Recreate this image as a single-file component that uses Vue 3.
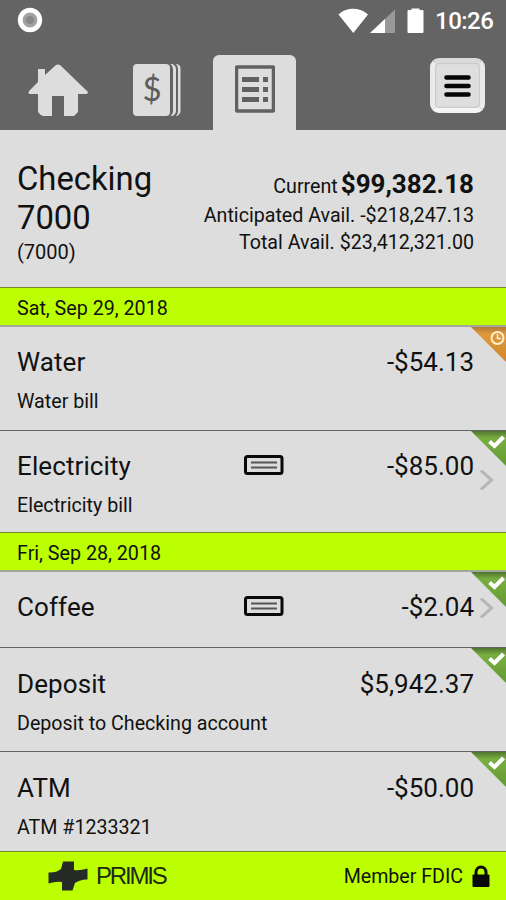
<script setup>
const groups = [
  {
    date: 'Sat, Sep 29, 2018',
    items: [
      { name: 'Water', amount: '-$54.13', memo: 'Water bill', state: 'pending', size: 'tall' },
      { name: 'Electricity', amount: '-$85.00', memo: 'Electricity bill', state: 'cleared', check: true, more: true, size: 'mid' },
    ],
  },
  {
    date: 'Fri, Sep 28, 2018',
    items: [
      { name: 'Coffee', amount: '-$2.04', state: 'cleared', check: true, more: true, size: 'short' },
      { name: 'Deposit', amount: '$5,942.37', memo: 'Deposit to Checking account', state: 'cleared', size: 'tall low' },
      { name: 'ATM', amount: '-$50.00', memo: 'ATM #1233321', state: 'cleared', size: 'last low' },
    ],
  },
]
</script>

<template>
  <div class="screen">
    <header class="top">
      <div class="status">
        <svg class="record" width="26" height="26" viewBox="0 0 26 26">
          <circle cx="13" cy="13" r="9.800" fill="#a2a2a2" stroke="#fff" stroke-width="4.800" />
          <circle cx="13" cy="13" r="4" fill="#888" />
        </svg>
        <svg class="signals" width="88" height="28" viewBox="0 0 88 28">
          <path d="M0.500 7.500C8 -.2 22 -.2 30 7.500L15.300 26z" fill="#fff" />
          <path d="M57 2.500V26H32z" fill="#999" />
          <path d="M47 12V26H32z" fill="#fff" />
          <path d="M70.500 3h3V1.500h8V3h3q1 0 1 1v21q0 1-1 1h-14q-1 0-1-1V4q0-1 1-1z" fill="#fff" />
        </svg>
        <span class="time">10:26</span>
      </div>
      <nav class="tabs">
        <svg class="home" width="60" height="54" viewBox="0 0 60 54">
          <path d="M28 1Q30 0 32 1L60 28Q60 30 58 30H50V48L46 52H36V32H24V52H15Q12 51 10 48V30H1Q0 29 1 27L10 18V5H17V11z" fill="#ddd" />
        </svg>
        <svg class="money" width="48" height="52" viewBox="0 0 48 52">
          <rect width="37" height="52" rx="4" fill="#ddd" />
          <path d="M37.500 0Q40 2 40 5V47Q40 50 37.500 52H39.500Q43 50 43 47V5Q43 2 39.500 0zM43 0Q45 2 45 5V47Q45 50 43 52H44Q47.500 50 47.500 47V4Q47.500 1 44 0z" fill="#ddd" />
          <text x="19" y="37" text-anchor="middle" class="dollar">$</text>
        </svg>
        <div class="tab-active">
          <svg width="40" height="48" viewBox="0 0 40 48">
            <rect x="1.500" y="2" width="37" height="44" rx="1" fill="#ddd" stroke="#616161" stroke-width="3.500" />
            <path d="M7 14.500h17M7 24.500h17M7 34.500h17M28 14.500h5M28 24.500h5M28 34.500h5" stroke="#616161" stroke-width="5" />
          </svg>
        </div>
        <button class="menu" aria-label="Menu">
          <svg width="44" height="44" viewBox="0 0 44 44">
            <path d="M10.500 13.500h22M10.500 22h22M10.500 30.500h22" stroke="#050505" stroke-width="4.600" stroke-linecap="round" />
          </svg>
        </button>
      </nav>
    </header>

    <section class="summary">
      <div class="account">
        <div class="account-name">Checking<br />7000</div>
        <div class="account-no">(7000)</div>
      </div>
      <div class="balances">
        <div class="current"><span>Current</span><strong>$99,382.18</strong></div>
        <div class="line">Anticipated Avail. -$218,247.13</div>
        <div class="line">Total Avail. $23,412,321.00</div>
      </div>
    </section>

    <template v-for="g in groups" :key="g.date">
      <div class="date">{{ g.date }}</div>
      <div v-for="t in g.items" :key="t.name" class="row" :class="t.size">
        <div class="main">
          <span class="name">{{ t.name }}</span>
          <svg v-if="t.check" class="cheque" width="40" height="20" viewBox="0 0 40 20">
            <rect x="1.500" y="1.500" width="36.500" height="17" rx="2" fill="#ddd" stroke="#080808" stroke-width="3" />
            <path d="M7 7.500h26M7 12.500h26" stroke="#555" stroke-width="2" />
          </svg>
          <span class="amount">{{ t.amount }}</span>
        </div>
        <div v-if="t.memo" class="memo">{{ t.memo }}</div>
        <svg v-if="t.more" class="chevron" width="16" height="22" viewBox="0 0 16 22">
          <path d="M2 1.500L12.500 11L2 20.500" fill="none" stroke="#b4b4b4" stroke-width="3" />
        </svg>
        <svg class="flag" width="36" height="36" viewBox="0 0 36 36">
          <defs>
            <linearGradient :id="'g' + t.name" x1="0" y1="0" x2="0" y2="1">
              <stop offset="0" :stop-color="t.state === 'pending' ? '#b07a35' : '#4f7530'" />
              <stop offset=".2" :stop-color="t.state === 'pending' ? '#e0983c' : '#79ae40'" />
              <stop offset="1" :stop-color="t.state === 'pending' ? '#d0872c' : '#629a33'" />
            </linearGradient>
          </defs>
          <path d="M1 0H36V35z" :fill="`url(#g${t.name})`" />
          <g v-if="t.state === 'pending'" fill="none" stroke="#fff0cf" stroke-width="2">
            <circle cx="27.500" cy="11" r="6" />
            <path d="M27.500 7v4.500h3.500" stroke-width="1.500" />
          </g>
          <path v-else d="M19.500 10.500L24.500 15L33.500 6" fill="none" stroke="#fff" stroke-width="4" />
        </svg>
      </div>
    </template>

    <footer class="foot">
      <div class="brand">
        <svg width="40" height="30" viewBox="0 0 40 30">
          <path d="M15 .5H26V9Q32 10 39.500 7.500V18.500Q33 18 27 22L24.500 29.500H14V21Q8 20 .5 22.500V11.500Q8 12 13 8z" fill="#252b26" />
        </svg>
        <span class="brand-name">PRIMIS</span>
      </div>
      <div class="member">
        <span>Member FDIC</span>
        <svg width="18" height="22" viewBox="0 0 18 22">
          <path d="M4 10V7.500a5 5.500 0 0 1 10 0V10" fill="none" stroke="#080808" stroke-width="3" />
          <rect x=".5" y="9.500" width="17" height="12.500" rx="1" fill="#080808" />
        </svg>
      </div>
    </footer>
  </div>
</template>

<style>
body { margin: 0; background: #ddd; }
</style>

<style scoped>
* { box-sizing: border-box; }
.screen { width: 506px; height: 900px; overflow: hidden; display: flex; flex-direction: column; background: #ddd; color: #111; font-family: Roboto, sans-serif; white-space: nowrap; }
svg { display: block; flex: none; }
.top { height: 130px; flex: none; background: #646464; }
.status { height: 55px; display: flex; align-items: flex-start; padding: 7px 12px 0 17px; }
.signals { margin-left: auto; }
.time { color: #fff; font-size: 24px; line-height: 28px; font-weight: 500; margin-left: 9px; width: 59px; letter-spacing: -.5px; }
.tabs { height: 75px; display: flex; align-items: flex-start; padding-left: 28px; }
.home { margin-top: 9px; }
.money { margin: 9px 0 0 45px; }
.dollar { font: 33px Lato, sans-serif; fill: #5c5c5c; }
.tab-active { width: 83px; height: 75px; margin-left: 32px; background: #ddd; border-radius: 6px 6px 0 0; display: flex; justify-content: center; padding-top: 10px; }
.menu { width: 55px; height: 55px; margin: 3px 0 0 134px; border: 5px solid #eaeaea; border-top-color: #dadada; border-bottom-color: #f5f5f5; border-radius: 9px; background: #dedede; padding: 0; display: flex; align-items: center; justify-content: center; box-shadow: inset 0 0 2px #999; }
.summary { height: 157px; flex: none; display: flex; justify-content: space-between; padding: 30px 32px 0 17px; }
.account-name { font-size: 32.800px; line-height: 38.500px; }
.account-no { font-size: 20px; line-height: 24px; margin-top: 3px; }
.balances { padding-top: 9px; text-align: right; font-size: 19.650px; }
.current { display: flex; align-items: baseline; justify-content: flex-end; gap: 3px; line-height: 31px; }
.current strong { font-size: 26px; font-weight: 700; }
.line { line-height: 27px; }
.date { height: 39px; flex: none; background: #bf0; border-top: 1.500px solid #70852d; border-bottom: 1px solid #a0a98a; padding-left: 17px; font-size: 19.700px; line-height: 42px; }
.row { position: relative; flex: none; border-top: 1px solid #666; padding: 20px 32px 0 17px; }
.row.low { padding-top: 21px; }
.date + .row { border-top-color: #a5a5a5; }
.tall { height: 104px; }
.mid { height: 102px; }
.short { height: 76px; }
.last { height: 100px; }
.main { display: grid; grid-template-columns: 227px 40px 1fr; align-items: center; height: 30px; font-size: 26px; line-height: 30px; }
.name { grid-column: 1; letter-spacing: .1px; }
.cheque { grid-column: 2; margin-top: -3px; }
.amount { grid-column: 3; text-align: right; }
.memo { margin-top: 13px; font-size: 19.650px; line-height: 24px; }
.flag { position: absolute; right: 0; top: 0; }
.chevron { position: absolute; right: 11px; top: 38px; }
.short .chevron { top: 25px; }
.foot { flex: none; height: 49px; background: #bf0; border-top: 1.500px solid #6e8b25; display: flex; align-items: center; justify-content: space-between; padding: 0 16px 0 48px; }
.brand { display: flex; align-items: center; gap: 8px; }
.brand-name { font-family: "Liberation Sans", sans-serif; font-size: 24px; letter-spacing: -2.200px; color: #202a12; }
.member { display: flex; align-items: center; gap: 9px; font-size: 19.600px; line-height: 24px; }
.member span { padding-top: 1px; }
</style>
